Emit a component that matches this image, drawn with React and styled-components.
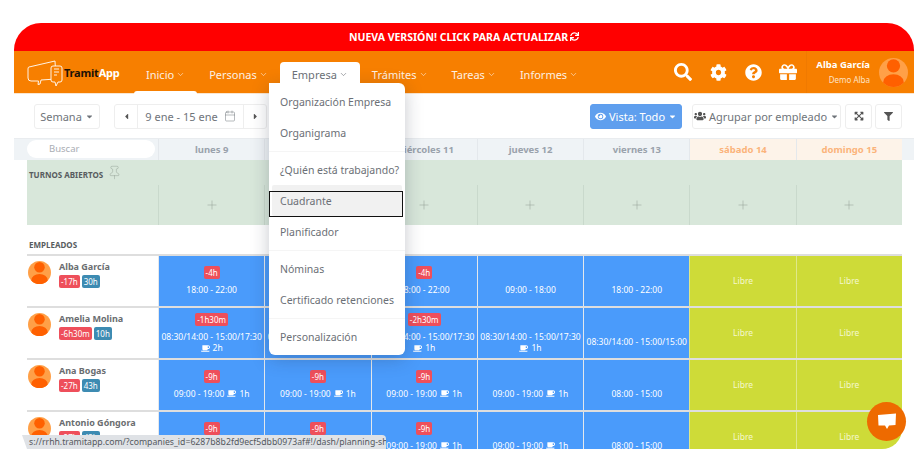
import React from "react";
import styled, { createGlobalStyle } from "styled-components";
import { FaSearch, FaCog, FaQuestionCircle, FaGift, FaSync, FaEye, FaUsers, FaExpandArrowsAlt, FaFilter, FaCaretDown, FaCaretLeft, FaCaretRight, FaCoffee } from "react-icons/fa";
import { ChevronDown, Calendar, Pin, Plus } from "lucide-react";

const Global = createGlobalStyle`
  html, body { margin: 0; padding: 0; background: #fff; }
  * { box-sizing: border-box; }
  body { font-family: "Noto Sans", "Open Sans", sans-serif; }
`;

const Frame = styled.div`
  position: relative;
  margin: 23px 0 0 14px;
  width: 900px;
  height: 426px;
  border-radius: 27px 27px 0 0;
  overflow: hidden;
  display: flex;
  flex-direction: column;
  background: #fff;
`;
const Banner = styled.div`
  height: 28px;
  flex: none;
  background: #ff0000;
  color: #fff;
  font-size: 10.5px;
  font-weight: 700;
  display: flex;
  align-items: center;
  justify-content: center;
  gap: 2px;
  padding-bottom: 1px;
`;
const Navbar = styled.header`
  height: 43px;
  flex: none;
  background: #f77f00;
  display: flex;
  padding-left: 13px;
  border-bottom: 1px solid #fbe6cf;
`;
const Logo = styled.div`
  width: 107px;
  display: flex;
  align-items: center;
  font-size: 11px;
  font-weight: 700;
  letter-spacing: -0.2px;
  color: #fff;
  b { color: #1c1206; font-weight: 700; }
  svg { margin-right: 1px; margin-top: 2px; }
`;
const Nav = styled.nav`
  display: flex;
  margin-top: 11px;
  height: 32px;
`;
const NavItem = styled.div`
  position: relative;
  padding: 0 12px;
  display: flex;
  align-items: center;
  gap: 2px;
  font-size: 11px;
  padding-bottom: 7px;
  color: ${(p) => (p.$open ? "#6b6f76" : "#fdf0e2")};
  background: ${(p) => (p.$open ? "#fff" : "transparent")};
  border-radius: 4px 4px 0 0;
  z-index: ${(p) => (p.$open ? 5 : 0)};
  &::after {
    content: ${(p) => (p.$current ? '""' : "none")};
    position: absolute;
    left: 0;
    right: 0;
    bottom: 0;
    height: 3px;
    background: #fff;
    border-radius: 3px 3px 0 0;
  }
`;
const NavRight = styled.div`
  margin-left: auto;
  display: flex;
  align-items: center;
`;
const IconLink = styled.span`
  display: flex;
  color: #fff;
  margin-right: ${(p) => p.$gap}px;
`;
const UserBox = styled.div`
  height: 100%;
  border-left: 1px solid #f07a00;
  display: flex;
  align-items: center;
  padding: 0 6px 0 6px;
  margin-left: 9px;
`;
const UserText = styled.div`
  text-align: right;
  margin-right: 9px;
  color: #fff;
  width: 57px;
  white-space: nowrap;
  display: flex;
  flex-direction: column;
  align-items: flex-end;
  strong { font-size: 9.5px; line-height: 14px; font-weight: 700; }
  span { font-size: 8px; line-height: 13px; color: #fde3c8; margin-top: 1px; }
`;
const Toolbar = styled.div`
  height: 44px;
  flex: none;
  display: flex;
  align-items: center;
  padding: 0 12px 0 20px;
`;
const Btn = styled.div`
  height: 25px;
  width: ${(p) => p.$w}px;
  flex: none;
  display: flex;
  align-items: center;
  justify-content: center;
  gap: 3px;
  border: 1px solid ${(p) => (p.$primary ? "#5e9eee" : "#eeeeee")};
  border-radius: 3px;
  background: ${(p) => (p.$primary ? "#5f9fee" : "#fff")};
  color: ${(p) => (p.$primary ? "#fff" : "#6f747a")};
  font-size: 11px;
  margin-left: ${(p) => p.$ml || 0};
`;
const Pager = styled.div`
  margin-left: 14px;
  width: 153px;
  height: 25px;
  display: flex;
  border: 1px solid #eeeeee;
  border-radius: 3px;
  font-size: 11px;
  color: #6f747a;
  align-items: stretch;
`;
const PagerArrow = styled.div`
  width: 22px;
  display: flex;
  align-items: center;
  justify-content: center;
  color: #555;
`;
const PagerLabel = styled.div`
  flex: 1;
  display: flex;
  align-items: center;
  justify-content: center;
  gap: 6px;
  border-left: 1px solid #eeeeee;
  border-right: 1px solid #eeeeee;
`;
const Head = styled.div`
  height: 22px;
  flex: none;
  background: #eff3f6;
  border-top: 1px solid #e9ecef;
  padding: 0 12px 0 13px;
  display: grid;
  grid-template-columns: 131px repeat(7, 1fr);
`;
const SearchPill = styled.div`
  width: 128px;
  height: 18px;
  margin-top: 1px;
  border-radius: 9px;
  background: #fff;
  color: #a9adb3;
  font-size: 9.5px;
  line-height: 18px;
  padding-left: 22px;
`;
const DayCell = styled.div`
  display: flex;
  align-items: center;
  justify-content: center;
  font-size: 9.5px;
  font-weight: 700;
  color: ${(p) => (p.$weekend ? "#fbb37b" : "#9aa2ac")};
  background: ${(p) => (p.$weekend ? "#fdf3e9" : "transparent")};
  border-left: 1px solid #e4e8ec;
`;
const Body = styled.div`
  flex: 1;
  min-height: 0;
  margin: 0 12px 0 13px;
  overflow: hidden;
  border-bottom-right-radius: 20px;
`;
const Open = styled.section`
  background: #d8e7da;
  height: 65px;
`;
const OpenTitle = styled.div`
  height: 25px;
  display: flex;
  align-items: flex-end;
  padding: 0 0 5px 2px;
  font-size: 8px;
  font-weight: 700;
  color: #575c5e;
  svg { margin-left: 4px; margin-bottom: 0; }
`;
const OpenGrid = styled.div`
  height: 40px;
  display: grid;
  grid-template-columns: 131px repeat(7, 1fr);
`;
const OpenCell = styled.div`
  border-left: 1px solid #c9d9cc;
  display: flex;
  align-items: center;
  justify-content: center;
  color: #8b9a8f;
`;
const SectionLabel = styled.div`
  height: 29px;
  display: flex;
  align-items: flex-end;
  padding: 0 0 4px 2px;
  font-size: 8px;
  font-weight: 700;
  color: #575c5e;
`;
const Row = styled.div`
  height: 52px;
  display: grid;
  grid-template-columns: 131px repeat(7, 1fr);
  border-top: 2px solid #dedede;
`;
const Person = styled.div`
  display: flex;
  padding: 5px 0 0 1px;
  align-items: flex-start;
`;
const PersonInfo = styled.div`
  margin-left: 8px;
  font-size: 9px;
  font-weight: 700;
  color: #6a6d70;
  line-height: 12px;
`;
const Chips = styled.div`
  display: flex;
  gap: 2px;
  margin-top: 2px;
`;
const Chip = styled.span`
  height: 13px;
  padding: 0 2px;
  border-radius: 2px;
  font-size: 8px;
  font-weight: 400;
  line-height: 13px;
  color: #fff;
  background: ${(p) => (p.$info ? "#3d8bb2" : "#ee4f5b")};
`;
const Shift = styled.div`
  border-left: 1px solid #e4e8ec;
  background: #4a9bfb;
  color: #fff;
  display: flex;
  flex-direction: column;
  align-items: center;
  font-size: 8.5px;
  padding-top: ${(p) => (p.$compact ? 5 : 10)}px;
`;
const ShiftBadge = styled.span`
  height: 13px;
  min-width: 14px;
  padding: 0 2px;
  border-radius: 2px;
  background: ${(p) => (p.$empty ? "transparent" : "#ee4f5b")};
  font-size: 8px;
  line-height: 13px;
  text-align: center;
`;
const ShiftTime = styled.div`
  margin-top: 4px;
  line-height: 13px;
  display: flex;
  align-items: center;
  gap: 3px;
  white-space: nowrap;
`;
const ShiftBreak = styled.div`
  line-height: 10px;
  display: flex;
  align-items: center;
  gap: 3px;
`;
const Free = styled.div`
  border-left: 1px solid #dfe88a;
  background: #cedb38;
  color: #f4f7cf;
  font-size: 8.5px;
  display: flex;
  align-items: center;
  justify-content: center;
  padding-bottom: 2px;
`;
const Dropdown = styled.div`
  position: absolute;
  left: 255px;
  top: 60px;
  width: 136px;
  height: 272px;
  padding: 3px 0;
  background: #fff;
  border-radius: 0 6px 6px 6px;
  box-shadow: 0 4px 18px rgba(30, 40, 60, 0.25);
  z-index: 4;
`;
const MenuItem = styled.div`
  position: relative;
  height: 31px;
  margin: 0 3px;
  padding-left: 8px;
  display: flex;
  align-items: center;
  white-space: nowrap;
  font-size: 10.5px;
  color: #6b6f76;
  border-radius: 2px;
  background: ${(p) => (p.$active ? "#f1f1f1" : "transparent")};
  &::after {
    content: ${(p) => (p.$active ? '""' : "none")};
    position: absolute;
    left: -3px;
    right: -1px;
    top: 6px;
    bottom: -1px;
    border: 1px solid #111;
  }
`;
const MenuDivider = styled.div`
  height: 1px;
  margin: 3px 0 2px;
  background: #f5f5f5;
`;
const StatusBar = styled.div`
  position: absolute;
  left: 8px;
  bottom: 0;
  width: 364px;
  height: 14px;
  background: #dfe2e6;
  border-top-right-radius: 4px;
  clip-path: polygon(0 0, 100% 0, 100% 100%, 5px 100%);
  color: #55595e;
  font-size: 8.7px;
  line-height: 14px;
  padding-left: 7px;
  white-space: nowrap;
  overflow: hidden;
  z-index: 6;
`;
const Chat = styled.div`
  position: absolute;
  left: 853px;
  top: 379px;
  width: 39px;
  height: 39px;
  border-radius: 50%;
  background: #ee6a00;
  display: flex;
  align-items: center;
  justify-content: center;
  z-index: 6;
`;

const Avatar = ({ size = 23 }) => (
  <svg width={size} height={size} viewBox="0 0 24 24" style={{ flex: "none" }}>
    <defs>
      <clipPath id={`av${size}`}><circle cx="12" cy="12" r="12" /></clipPath>
    </defs>
    <circle cx="12" cy="12" r="12" fill="#ffa047" />
    <g clipPath={`url(#av${size})`} fill="#ff6000">
      <circle cx="12" cy="6.5" r="5.5" />
      <ellipse cx="12" cy="20" rx="8.5" ry="6.5" />
    </g>
  </svg>
);

const LogoMark = () => (
  <svg width="36" height="28" viewBox="0 0 36 28" fill="none" stroke="#fff" strokeWidth="0.9">
    <path d="M2 8 L28 2 L29 20 L14 21 L13 25 L11 25.5 L11.5 22 L4 22 Q1 22 1 19 V10 Q1 8 2 8 Z" />
    <path d="M24 9 Q24 7 26 7 H33 Q35 7 35 9 V21 Q35 23 33 23 H31 L29 27 L28 23 H26 Q24 23 24 21 Z" fill="#f77f00" />
    <path d="M27 10 H32 M27 13 H32 M27 16 H30" />
  </svg>
);

const Chev = () => <ChevronDown size={9} strokeWidth={1.6} />;
const Caret = () => <FaCaretDown size={9} />;
const Cup = () => <FaCoffee size={9} />;

const navItems = [
  { t: "Inicio", current: true },
  { t: "Personas" },
  { t: "Empresa", open: true },
  { t: "Trámites" },
  { t: "Tareas" },
  { t: "Informes" },
];
const days = ["lunes 9", "martes 10", "miércoles 11", "jueves 12", "viernes 13", "sábado 14", "domingo 15"];

const rows = [
  {
    name: "Alba García", a: "-17h", b: "30h",
    shifts: [
      { badge: "-4h", time: "18:00 - 22:00" },
      { badge: "-4h", time: "18:00 - 22:00" },
      { badge: "-4h", time: "18:00 - 22:00" },
      { time: "09:00 - 18:00" },
      { time: "18:00 - 22:00" },
    ],
  },
  {
    name: "Amelia Molina", a: "-6h30m", b: "10h",
    shifts: [
      { badge: "-1h30m", time: "08:30/14:00 - 15:00/17:30", pause: "2h", compact: true },
      { badge: "-2h30m", time: "08:30/14:00 - 15:00/17:30", pause: "1h", compact: true },
      { badge: "-2h30m", time: "08:30/14:00 - 15:00/17:30", pause: "1h", compact: true },
      { time: "08:30/14:00 - 15:00/17:30", pause: "1h", compact: true },
      { time: "08:30/14:00 - 15:00/15:00" },
    ],
  },
  {
    name: "Ana Bogas", a: "-27h", b: "43h",
    shifts: [
      { badge: "-9h", time: "09:00 - 19:00", cup: "1h" },
      { badge: "-9h", time: "09:00 - 19:00", cup: "1h" },
      { badge: "-9h", time: "09:00 - 19:00", cup: "1h" },
      { time: "09:00 - 19:00", cup: "1h" },
      { time: "08:00 - 15:00" },
    ],
  },
  {
    name: "Antonio Góngora", a: "-27h", b: "43h",
    shifts: [
      { badge: "-9h", time: "09:00 - 19:00", cup: "1h" },
      { badge: "-9h", time: "09:00 - 19:00", cup: "1h" },
      { badge: "-9h", time: "09:00 - 19:00", cup: "1h" },
      { time: "09:00 - 19:00", cup: "1h" },
      { time: "08:00 - 15:00" },
    ],
  },
];

const menu = [
  ["Organización Empresa", "Organigrama"],
  ["¿Quién está trabajando?", "Cuadrante", "Planificador"],
  ["Nóminas", "Certificado retenciones"],
  ["Personalización"],
];

export default function App() {
  return (
    <>
      <Global />
      <Frame>
        <Banner>NUEVA VERSIÓN! CLICK PARA ACTUALIZAR <FaSync size={9} /></Banner>
        <Navbar>
          <Logo>
            <LogoMark />
            <span><b>Tramit</b>App</span>
          </Logo>
          <Nav>
            {navItems.map((n) => (
              <NavItem key={n.t} $open={n.open} $current={n.current}>{n.t} <Chev /></NavItem>
            ))}
          </Nav>
          <NavRight>
            <IconLink $gap={18}><FaSearch size={18} /></IconLink>
            <IconLink $gap={18}><FaCog size={17} /></IconLink>
            <IconLink $gap={17}><FaQuestionCircle size={17} /></IconLink>
            <IconLink $gap={0}><FaGift size={18} /></IconLink>
            <UserBox>
              <UserText>
                <strong>Alba García</strong>
                <span>Demo Alba</span>
              </UserText>
              <Avatar size={29} />
            </UserBox>
          </NavRight>
        </Navbar>
        <Toolbar>
          <Btn $w={66}>Semana <Caret /></Btn>
          <Pager>
            <PagerArrow><FaCaretLeft size={9} /></PagerArrow>
            <PagerLabel>9 ene - 15 ene <Calendar size={12} strokeWidth={1} /></PagerLabel>
            <PagerArrow><FaCaretRight size={9} /></PagerArrow>
          </Pager>
          <Btn $primary $w={92} $ml="auto"><FaEye size={11} /> Vista: Todo <Caret /></Btn>
          <Btn $w={149} $ml="10px"><FaUsers size={12} color="#555" /> Agrupar por empleado <Caret /></Btn>
          <Btn $w={27} $ml="4px"><FaExpandArrowsAlt size={10} color="#555" /></Btn>
          <Btn $w={27} $ml="3px"><FaFilter size={9} color="#555" /></Btn>
        </Toolbar>
        <Head>
          <SearchPill>Buscar</SearchPill>
          {days.map((d, i) => (
            <DayCell key={d} $weekend={i > 4}>{d}</DayCell>
          ))}
        </Head>
        <Body>
          <Open>
            <OpenTitle>TURNOS ABIERTOS <Pin size={15} strokeWidth={0.7} color="#8b9a8f" /></OpenTitle>
            <OpenGrid>
              <div />
              {days.map((d) => (
                <OpenCell key={d}><Plus size={14} strokeWidth={0.8} /></OpenCell>
              ))}
            </OpenGrid>
          </Open>
          <SectionLabel>EMPLEADOS</SectionLabel>
          {rows.map((r) => (
            <Row key={r.name}>
              <Person>
                <Avatar />
                <PersonInfo>
                  {r.name}
                  <Chips>
                    <Chip>{r.a}</Chip>
                    <Chip $info>{r.b}</Chip>
                  </Chips>
                </PersonInfo>
              </Person>
              {r.shifts.map((s, i) => (
                <Shift key={i} $compact={s.compact}>
                  <ShiftBadge $empty={!s.badge}>{s.badge}</ShiftBadge>
                  <ShiftTime>
                    {s.time}
                    {s.cup && <><Cup /> {s.cup}</>}
                  </ShiftTime>
                  {s.pause && <ShiftBreak><Cup /> {s.pause}</ShiftBreak>}
                </Shift>
              ))}
              <Free>Libre</Free>
              <Free>Libre</Free>
            </Row>
          ))}
        </Body>
        <Dropdown>
          {menu.map((group, g) => (
            <React.Fragment key={g}>
              {g > 0 && <MenuDivider />}
              {group.map((m) => (
                <MenuItem key={m} $active={m === "Cuadrante"}>{m}</MenuItem>
              ))}
            </React.Fragment>
          ))}
        </Dropdown>
        <StatusBar>s://rrhh.tramitapp.com/?companies_id=6287b8b2fd9ecf5dbb0973af#!/dash/planning-shifts</StatusBar>
        <Chat>
          <svg width="20" height="17" viewBox="0 0 20 17">
            <path d="M1 2 L19 0.5 L18.5 12 L12 12.5 L10 16 L8 12.5 L1.5 12.5 Z" fill="#fff" />
          </svg>
        </Chat>
      </Frame>
    </>
  );
}
